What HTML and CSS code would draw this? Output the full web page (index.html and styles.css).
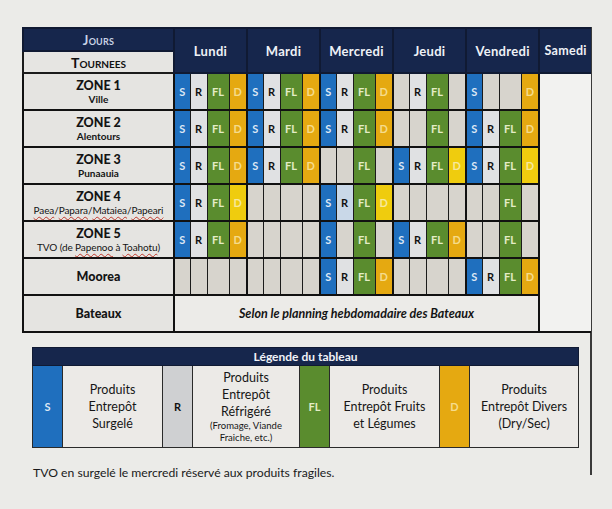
FILE: index.html
```html
<!DOCTYPE html>
<html lang="fr">
<head>
<meta charset="utf-8">
<title>Planning des tournées</title>
<link rel="stylesheet" href="styles.css">
</head>
<body>
<div class="sheet">
  <table class="plan">
    <colgroup>
      <col class="c-zone">
      <col class="c-s"><col class="c-r"><col class="c-fl"><col class="c-d">
      <col class="c-s"><col class="c-r"><col class="c-fl"><col class="c-d">
      <col class="c-s"><col class="c-r"><col class="c-fl"><col class="c-d">
      <col class="c-s"><col class="c-r"><col class="c-fl"><col class="c-d">
      <col class="c-s"><col class="c-r"><col class="c-fl"><col class="c-d">
      <col class="c-sam">
    </colgroup>
    <thead>
      <tr class="h1">
        <th class="jours">Jours</th>
        <th class="day" colspan="4" rowspan="2">Lundi</th>
        <th class="day" colspan="4" rowspan="2">Mardi</th>
        <th class="day" colspan="4" rowspan="2">Mercredi</th>
        <th class="day" colspan="4" rowspan="2">Jeudi</th>
        <th class="day" colspan="4" rowspan="2">Vendredi</th>
        <th class="day sam" rowspan="2">Samedi</th>
      </tr>
      <tr class="h2">
        <th class="tournees">Tournees</th>
      </tr>
    </thead>
    <tbody>
      <tr>
        <th class="zone"><b>ZONE 1</b><span>Ville</span></th>
        <td class="s">S</td><td class="r">R</td><td class="fl">FL</td><td class="d">D</td>
        <td class="s">S</td><td class="r">R</td><td class="fl">FL</td><td class="d">D</td>
        <td class="s">S</td><td class="r">R</td><td class="fl">FL</td><td class="d">D</td>
        <td class="e"></td><td class="r">R</td><td class="fl">FL</td><td class="e"></td>
        <td class="s">S</td><td class="e"></td><td class="e"></td><td class="d">D</td>
        <td class="samedi" rowspan="7"></td>
      </tr>
      <tr>
        <th class="zone"><b>ZONE 2</b><span>Alentours</span></th>
        <td class="s">S</td><td class="r">R</td><td class="fl">FL</td><td class="d">D</td>
        <td class="s">S</td><td class="r">R</td><td class="fl">FL</td><td class="d">D</td>
        <td class="s">S</td><td class="r">R</td><td class="fl">FL</td><td class="d">D</td>
        <td class="e"></td><td class="e"></td><td class="fl">FL</td><td class="e"></td>
        <td class="s">S</td><td class="r">R</td><td class="fl">FL</td><td class="d">D</td>
      </tr>
      <tr>
        <th class="zone"><b>ZONE 3</b><span>Punaauia</span></th>
        <td class="s">S</td><td class="r">R</td><td class="fl">FL</td><td class="d">D</td>
        <td class="s">S</td><td class="r">R</td><td class="fl">FL</td><td class="d">D</td>
        <td class="e"></td><td class="e"></td><td class="fl">FL</td><td class="e"></td>
        <td class="s">S</td><td class="r">R</td><td class="fl">FL</td><td class="d y">D</td>
        <td class="s">S</td><td class="r">R</td><td class="fl">FL</td><td class="d y">D</td>
      </tr>
      <tr>
        <th class="zone"><b>ZONE 4</b><span class="small"><u>Paea</u>/<u>Papara</u>/<u>Mataiea</u>/<u>Papeari</u></span></th>
        <td class="s">S</td><td class="r">R</td><td class="fl">FL</td><td class="d y">D</td>
        <td class="e"></td><td class="e"></td><td class="e"></td><td class="e"></td>
        <td class="s">S</td><td class="r rb">R</td><td class="fl">FL</td><td class="d y">D</td>
        <td class="e"></td><td class="e"></td><td class="e"></td><td class="e"></td>
        <td class="e"></td><td class="e"></td><td class="fl">FL</td><td class="e"></td>
      </tr>
      <tr>
        <th class="zone"><b>ZONE 5</b><span class="small">TVO (de <u>Papenoo</u> à <u>Toahotu</u>)</span></th>
        <td class="s">S</td><td class="r">R</td><td class="fl">FL</td><td class="d">D</td>
        <td class="e"></td><td class="e"></td><td class="e"></td><td class="e"></td>
        <td class="s">S</td><td class="e"></td><td class="fl">FL</td><td class="e"></td>
        <td class="s">S</td><td class="r">R</td><td class="fl">FL</td><td class="d">D</td>
        <td class="e"></td><td class="e"></td><td class="fl">FL</td><td class="e"></td>
      </tr>
      <tr>
        <th class="zone"><b>Moorea</b></th>
        <td class="e"></td><td class="e"></td><td class="e"></td><td class="e"></td>
        <td class="e"></td><td class="e"></td><td class="e"></td><td class="e"></td>
        <td class="s">S</td><td class="r">R</td><td class="fl">FL</td><td class="d">D</td>
        <td class="e"></td><td class="e"></td><td class="e"></td><td class="e"></td>
        <td class="s">S</td><td class="r">R</td><td class="fl">FL</td><td class="d">D</td>
      </tr>
      <tr>
        <th class="zone"><b>Bateaux</b></th>
        <td class="boats" colspan="20">Selon le planning hebdomadaire des Bateaux</td>
      </tr>
    </tbody>
  </table>

  <table class="legend">
    <colgroup>
      <col class="l-key"><col class="l-txt1"><col class="l-key"><col class="l-txt2">
      <col class="l-key"><col class="l-txt3"><col class="l-key"><col class="l-txt4">
    </colgroup>
    <thead>
      <tr><th colspan="8">Légende du tableau</th></tr>
    </thead>
    <tbody>
      <tr>
        <td class="k s">S</td>
        <td class="t">Produits<br>Entrepôt<br>Surgelé</td>
        <td class="k rk">R</td>
        <td class="t">Produits<br>Entrepôt<br>Réfrigéré<br><small>(Fromage, Viande<br>Fraiche, etc.)</small></td>
        <td class="k fl">FL</td>
        <td class="t">Produits<br>Entrepôt Fruits<br>et Légumes</td>
        <td class="k d">D</td>
        <td class="t">Produits<br>Entrepôt Divers<br>(Dry/Sec)</td>
      </tr>
    </tbody>
  </table>

  <p class="note">TVO en surgelé le mercredi réservé aux produits fragiles.</p>
</div>
</body>
</html>
```

FILE: styles.css
```css
html, body {
  margin: 0;
  padding: 0;
}

body {
  background: #ebebe8;
  font-family: Lato, "Open Sans", "Liberation Sans", sans-serif;
  color: #141414;
  width: 612px;
  height: 509px;
  overflow: hidden;
}

.sheet {
  margin: 27px 0 0 22px;
  width: 568px;
  height: 448px;
  border-right: 2px solid #3a3a3a;
}

/* ---------- main planning table ---------- */
.plan {
  border-collapse: collapse;
  table-layout: fixed;
  width: 568px;
}

.c-zone { width: 151px; }
.c-s { width: 16px; }
.c-r { width: 17px; }
.c-fl { width: 22px; }
.c-d { width: 18px; }
.c-sam { width: 52px; }

.plan th,
.plan td {
  padding: 0;
  text-align: center;
  vertical-align: middle;
  border: 1px solid #1b1b1b;
}

.plan thead th {
  background: #16264c;
  color: #eef1f6;
  font-weight: 700;
  border: 2px solid #101a33;
}

.plan .h1 { height: 23px; }
.plan .h2 { height: 22px; }

.plan .jours {
  font-variant: small-caps;
  font-size: 13px;
  color: #c9d3e6;
  letter-spacing: 0.2px;
}

.plan .tournees {
  background: #e6e5e2;
  color: #111;
  font-variant: small-caps;
  font-size: 14px;
  border: 2px solid #1b1b1b;
}

.plan .day {
  font-size: 13px;
  letter-spacing: 0.3px;
}

.plan .day.sam {
  font-size: 12.5px;
  border-right: none;
}

.plan tbody tr { height: 37px; }

.plan tbody th,
.plan tbody tr td:nth-child(4n+2) {
  border-left: 2px solid #111;
}

.plan tbody tr {
  border-bottom: 2px solid #111;
}

.zone {
  background: #e5e4e1;
  font-weight: 700;
  border: 2px solid #111;
}

.zone b {
  display: block;
  font-size: 12.5px;
  line-height: 15px;
}

.zone span {
  display: block;
  font-size: 10px;
  line-height: 13px;
}

.zone span.small {
  font-weight: 400;
  font-size: 10px;
  letter-spacing: -0.1px;
}

.zone u {
  text-decoration: underline wavy #c0392b;
  text-decoration-thickness: 1px;
  text-underline-offset: 2px;
}

.plan td {
  font-size: 11px;
  font-weight: 700;
}

.s { background: #1f6fbe; color: #dde7f4; }
.r { background: #e0e1e3; color: #111; }
.r.rb { background: #c9d8e8; }
.fl { background: #5a8c2e; color: #e4ecc6; }
.d { background: #e5a911; color: #f5dc8c; }
.d.y { background: #efcc0e; color: #f7e99c; }
.e { background: #d7d4cd; }

.plan td.samedi {
  background: #f2f2f0;
  border-left: 2px solid #111;
  border-right: none;
  border-bottom: none;
}

.plan td.boats {
  background: #ecebe8;
  font-size: 12.5px;
  font-style: italic;
  font-weight: 700;
  border-right: 2px solid #111;
}

/* ---------- legend ---------- */
.legend {
  border-collapse: collapse;
  table-layout: fixed;
  width: 546px;
  margin: 14px 0 0 10px;
}

.l-key { width: 30px; }
.l-txt1 { width: 100px; }
.l-txt2 { width: 107px; }
.l-txt3 { width: 110px; }
.l-txt4 { width: 109px; }

.legend th {
  background: #16264c;
  color: #f1f3f8;
  font-size: 12px;
  font-weight: 700;
  height: 17px;
  padding: 0;
  border: 1px solid #101a33;
}

.legend td {
  height: 81px;
  padding: 0;
  text-align: center;
  vertical-align: middle;
  border: 1px solid #2a2a2a;
  border-top: none;
}

.legend td.k {
  font-size: 11px;
  font-weight: 700;
}

.legend td.rk {
  background: #cfd0d2;
  color: #111;
}

.legend td.t {
  background: #eceae7;
  color: #161616;
  font-size: 12.5px;
  line-height: 17px;
}

.legend small {
  display: inline-block;
  font-size: 9.5px;
  line-height: 12px;
}

.note {
  margin: 17px 0 0 11px;
  font-size: 12.2px;
  color: #1a1a1a;
}
```
